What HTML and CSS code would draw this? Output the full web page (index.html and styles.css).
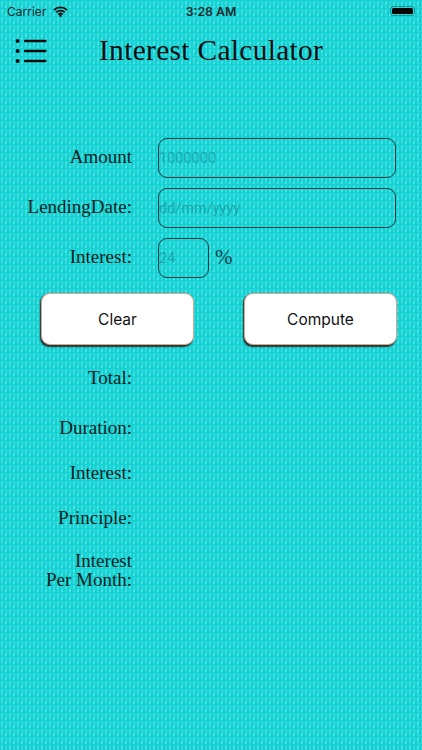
FILE: index.html
```html
<!DOCTYPE html>
<html lang="en">
<head>
<meta charset="utf-8">
<title>Interest Calculator</title>
<link rel="stylesheet" href="styles.css">
</head>
<body>
<main class="screen">
  <div class="status">
    <div class="status-left">
      <span>Carrier</span>
      <svg class="wifi" viewBox="0 0 16 12" width="15" height="11"><path d="M.9 4.4a10.2 10.2 0 0 1 14.2 0M3.3 7a6.8 6.8 0 0 1 9.4 0M5.7 9.4a3.3 3.3 0 0 1 4.6 0" fill="none" stroke="#0c0c0c" stroke-width="2"/><circle cx="8" cy="10.7" r="1.3" fill="#0c0c0c"/></svg>
    </div>
    <div class="status-time">3:28 AM</div>
    <div class="status-right"><div class="battery"><div class="battery-fill"></div></div></div>
  </div>
  <header class="header">
    <svg class="menu" viewBox="0 0 32 24" width="32" height="24"><g fill="#0a0a0a"><circle cx="2.6" cy="2" r="2"/><circle cx="2.6" cy="12" r="2"/><circle cx="2.6" cy="22" r="2"/><rect x="9" y=".8" width="22.5" height="2.5" rx="1"/><rect x="9" y="10.8" width="22.5" height="2.5" rx="1"/><rect x="9" y="20.8" width="22.5" height="2.5" rx="1"/></g></svg>
    <h1 class="title">Interest Calculator</h1>
  </header>
  <section class="form">
    <label class="label">Amount</label>
    <div class="field"><span class="ph">1000000</span></div>
    <label class="label">LendingDate:</label>
    <div class="field"><span class="ph">dd/mm/yyyy</span></div>
    <label class="label">Interest:</label>
    <div class="rate"><div class="field small"><span class="ph">24</span></div><span class="pct">%</span></div>
  </section>
  <div class="buttons">
    <button class="btn">Clear</button>
    <button class="btn">Compute</button>
  </div>
  <section class="results">
    <div class="res r1">Total:</div>
    <div class="res r2">Duration:</div>
    <div class="res r3">Interest:</div>
    <div class="res r3">Principle:</div>
    <div class="res r4">Interest<br>Per Month:</div>
  </section>
</main>
</body>
</html>
```
FILE: styles.css
```css
* { box-sizing: border-box; }
html, body { margin: 0; height: 100%; }
.screen {
  width: 422px; height: 750px; overflow: hidden;
  color: #06282c;
  font-family: "Liberation Serif", serif;
  background-color: #14d1d4;
  background-image: url("data:image/svg+xml,%3Csvg xmlns='http://www.w3.org/2000/svg' width='8' height='8'%3E%3Cg fill='%2380f2ec' fill-opacity='.5'%3E%3Cpath d='M1 2l2-1.2v3.4l-2 1.2zM5 6l2-1.2v3.4l-2 1.2z'/%3E%3C/g%3E%3Cg fill='%2360eae6' fill-opacity='.35'%3E%3Cpath d='M5 2l2-1.2v3.4l-2 1.2zM1 6l2-1.2v3.4l-2 1.2z'/%3E%3C/g%3E%3Cg fill='%23009aa6' fill-opacity='.25'%3E%3Crect x='3.6' y='3' width='1' height='2.4'/%3E%3Crect x='7.4' y='7' width='.6' height='1'/%3E%3C/g%3E%3C/svg%3E");
  background-size: 8px 8px;
}
.status {
  height: 22px; padding: 0 7px;
  display: grid; grid-template-columns: 1fr auto 1fr; align-items: center;
  font-family: Inter, Roboto, sans-serif; font-size: 12px; color: #1a2a2c;
}
.status-left { display: flex; align-items: center; gap: 7px; }
.status-time { font-weight: 600; font-size: 12.3px; }
.status-right { display: flex; justify-content: flex-end; }
.battery { width: 25px; height: 10px; border: 1px solid rgba(20,80,80,.5); border-radius: 3px; padding: 1px; }
.battery-fill { height: 100%; background: #050505; border-radius: 1.5px; }
.header { position: relative; height: 56px; padding: 0 0 0 15px; display: flex; align-items: center; }
.menu { display: block; margin-top: 1px; }
.title { margin: 0 0 0 52px; font-size: 29.4px; font-weight: 400; color: #050f12; letter-spacing: .33px; white-space: nowrap; }
.form {
  margin-top: 60px; padding-right: 26px;
  display: grid; grid-template-columns: 132px 1fr; column-gap: 26px; row-gap: 10px;
  align-items: center;
}
.label { text-align: right; font-size: 19px; white-space: nowrap; margin-top: -3px; color: #041f23; }
.field {
  height: 40px; border: 1px solid #0a3d44; border-radius: 9px;
  display: flex; align-items: center;
}
.ph { font-family: Roboto, sans-serif; font-size: 14.5px; color: rgba(20,120,130,.5); margin-top: 1px; }
.small { width: 51px; }
.rate { display: flex; align-items: center; gap: 6px; }
.pct { font-size: 21px; color: #14444c; margin-top: -2px; }
.buttons { margin-top: 15px; padding: 0 25px 0 41px; display: flex; justify-content: space-between; }
.btn {
  width: 153px; height: 52px;
  background: #fff; border: 1px solid #e3a08c; border-radius: 9px;
  box-shadow: -1px 1.5px 1.5px #23302f;
  font-family: Inter, Roboto, sans-serif; font-size: 15.5px; color: #111;
}
.results { margin-top: 22px; width: 132px; text-align: right; font-size: 19px; color: #041f23; }
.res { line-height: 22px; }
.r1 { margin-bottom: 28px; }
.r2 { margin-bottom: 23px; }
.r3 { margin-bottom: 23px; }
.r4 { line-height: 19px; margin-top: -1px; }
```
